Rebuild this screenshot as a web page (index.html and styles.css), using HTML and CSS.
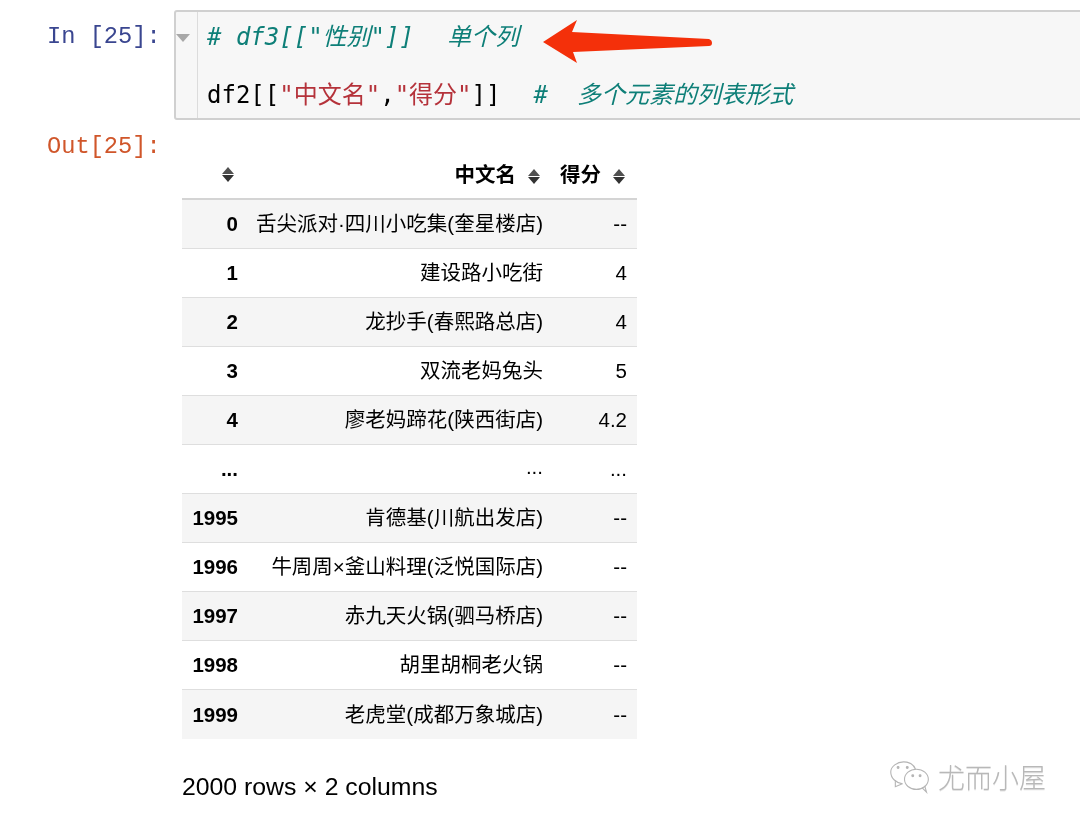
FILE: index.html
```html
<!DOCTYPE html>
<html lang="zh">
<head>
<meta charset="utf-8">
<title>Notebook</title>
<link rel="stylesheet" href="styles.css">
</head>
<body>
<div class="nb">
  <div class="cell in-cell">
    <div class="prompt in-prompt">In [25]:</div>
    <div class="input">
      <div class="gutter"><span class="collapse"></span></div>
      <div class="code">
        <div class="line"><span class="cm"># df3[["性别"]]<span class="gap gap-a"></span>单个列</span></div>
        <div class="line">df2<span class="br">[[</span><span class="st">"中文名"</span>,<span class="st">"得分"</span><span class="br">]]</span><span class="gap gap-a"></span><span class="cm">#<span class="gap gap-b"></span>多个元素的列表形式</span></div>
      </div>
    </div>
    <svg class="arrow" width="172" height="46" viewBox="0 0 172 46" aria-hidden="true">
      <path d="M2 22 L36 0 L31 12 L168 19 Q171 20 171 23 Q171 26 168 26 L32 32 L36 43 Z" fill="#f4300a"/>
    </svg>
  </div>
  <div class="cell out-cell">
    <div class="prompt out-prompt">Out[25]:</div>
    <div class="output">
      <table class="df">
        <thead>
          <tr>
            <th class="idx"><span class="sort"></span></th>
            <th>中文名<span class="sort"></span></th>
            <th class="score">得分<span class="sort"></span></th>
          </tr>
        </thead>
        <tbody>
          <tr><th>0</th><td>舌尖派对·四川小吃集(奎星楼店)</td><td>--</td></tr>
          <tr><th>1</th><td>建设路小吃街</td><td>4</td></tr>
          <tr><th>2</th><td>龙抄手(春熙路总店)</td><td>4</td></tr>
          <tr><th>3</th><td>双流老妈兔头</td><td>5</td></tr>
          <tr><th>4</th><td>廖老妈蹄花(陕西街店)</td><td>4.2</td></tr>
          <tr><th>...</th><td>...</td><td>...</td></tr>
          <tr><th>1995</th><td>肯德基(川航出发店)</td><td>--</td></tr>
          <tr><th>1996</th><td>牛周周×釜山料理(泛悦国际店)</td><td>--</td></tr>
          <tr><th>1997</th><td>赤九天火锅(驷马桥店)</td><td>--</td></tr>
          <tr><th>1998</th><td>胡里胡桐老火锅</td><td>--</td></tr>
          <tr><th>1999</th><td>老虎堂(成都万象城店)</td><td>--</td></tr>
        </tbody>
      </table>
      <p class="dims">2000 rows × 2 columns</p>
    </div>
  </div>
  <div class="mark">
    <svg width="44" height="33" viewBox="0 0 44 36" aria-hidden="true" fill="none" stroke="#b5b5b5" stroke-width="1.2">
      <path d="M14 25 C7 24 1 19 1 12 C1 6 8 1 15 1 C21 1 26 4 28 9"/>
      <path d="M6 21 L6 28 L13 25"/>
      <ellipse cx="29" cy="20" rx="13" ry="11"/>
      <path d="M35 29 L40 34 L38 27"/>
      <circle cx="9" cy="7" r="1" fill="#b5b5b5"/><circle cx="19" cy="7" r="1" fill="#b5b5b5"/>
      <circle cx="25" cy="16" r="1" fill="#b5b5b5"/><circle cx="33" cy="16" r="1" fill="#b5b5b5"/>
    </svg>
    <span class="mark-text">尤而小屋</span>
  </div>
</div>
</body>
</html>
```
FILE: styles.css
```css
* { box-sizing: border-box; }
html, body { margin: 0; padding: 0; background: #fff; }
body { width: 1080px; height: 825px; overflow: hidden; }
.nb {
  position: relative;
  width: 1080px;
  height: 825px;
  padding-top: 10px;
  overflow: hidden;
  filter: blur(0.35px);
  font-family: "Liberation Sans", "Noto Sans CJK SC", sans-serif;
}
.cell { display: flex; position: relative; }
.prompt {
  width: 174px;
  flex: none;
  padding-left: 47px;
  font-family: "Liberation Mono", monospace;
  font-size: 23.7px;
  line-height: 54px;
  white-space: pre;
}
.in-prompt { color: #3a4690; }
.out-prompt { color: #d0562a; line-height: 28px; padding-top: 4px; }
.input {
  display: flex;
  width: 960px;
  flex: none;
  height: 110px;
  background: #f7f7f7;
  border: 2px solid #d0d0d0;
  border-radius: 3px;
}
.gutter { width: 22px; flex: none; border-right: 1px solid #dcdcdc; padding: 22px 0 0; }
.collapse {
  display: block;
  width: 0;
  height: 0;
  border-left: 7px solid transparent;
  border-right: 7px solid transparent;
  border-top: 8px solid #a8a8a8;
}
.code {
  padding: 0 0 0 9px;
  font-family: "DejaVu Sans Mono", "Noto Sans CJK SC", monospace;
  font-size: 24px;
  color: #000;
}
.line { height: 58px; line-height: 50px; white-space: pre; }
.gap { display: inline-block; }
.gap-a { width: 33px; }
.gap-b { width: 29px; }
.cm { color: #0e7f78; font-style: italic; }
.st { color: #b5323a; }
.arrow { position: absolute; left: 541px; top: 10px; }
.out-cell { padding-top: 9px; }
.output { padding: 20px 0 0 8px; }
.df { border-collapse: collapse; width: 455px; font-size: 20.5px; color: #000; table-layout: fixed; }
.df th, .df td {
  text-align: right;
  padding: 0 10px;
  height: 49.1px;
  font-weight: 400;
  white-space: nowrap;
}
.df td:nth-child(2) { padding-left: 0; padding-bottom: 4px; }
.df th { font-weight: 700; }
.df th:nth-child(1) { width: 66px; }
.df th:nth-child(2) { width: 305px; }
.df thead tr { border-bottom: 2px solid #d4d4d4; }
.df thead th { height: 50px; padding-right: 12px; padding-bottom: 2px; }
.df thead th.idx { padding-right: 13px; }
.df thead th.score { padding-right: 11px; padding-left: 0; }
.df tbody tr { border-bottom: 1px solid #dedede; }
.df tbody tr:nth-child(odd) { background: #f5f5f5; }
.df tbody tr:last-child { border-bottom: 0; }
.sort {
  display: inline-block;
  width: 13px;
  height: 15px;
  margin-left: 12px;
  vertical-align: -2px;
  position: relative;
}
.sort::before, .sort::after {
  content: "";
  position: absolute;
  left: 0;
  border-left: 6.5px solid transparent;
  border-right: 6.5px solid transparent;
}
.sort::before { top: 0; border-bottom: 7px solid #505050; }
.sort::after { bottom: 0; border-top: 7px solid #333; }
.dims { margin: 33px 0 0; font-size: 24.8px; line-height: 30px; color: #000; }
.mark {
  position: absolute;
  left: 888px;
  top: 761px;
  display: flex;
  align-items: flex-start;
  gap: 6px;
}
.mark-text {
  font-family: "Noto Sans CJK SC", sans-serif;
  font-size: 27px;
  font-weight: 300;
  line-height: 32px;
  color: #b8b8b8;
  text-shadow: 0 1px 0 #e4e4e4;
}
```
